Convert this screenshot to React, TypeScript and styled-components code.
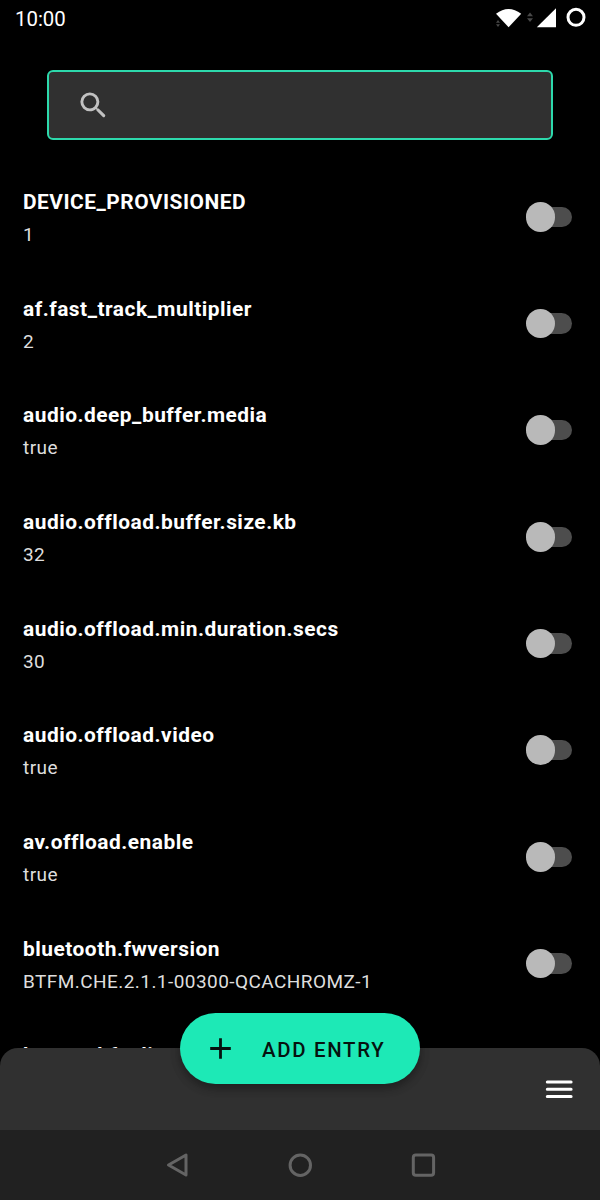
import React from "react";
import styled, { createGlobalStyle } from "styled-components";

const GlobalStyle = createGlobalStyle`
  * { box-sizing: border-box; }
  body { margin: 0; background: #000; overflow: hidden; }
`;

const Screen = styled.div`
  position: relative;
  width: 600px;
  height: 1200px;
  display: flex;
  flex-direction: column;
  overflow: hidden;
  background: #000;
  color: #fff;
  font-family: Roboto, sans-serif;
`;

const StatusBar = styled.header`
  height: 36px;
  flex: none;
  display: flex;
  align-items: center;
  justify-content: space-between;
  padding-left: 15px;
`;

const Clock = styled.span`
  font-size: 20.4px;
  line-height: 36px;
  padding-top: 1px;
`;

const StatusIcons = styled.svg`
  width: 120px;
  height: 36px;
`;

const SearchBox = styled.div`
  flex: none;
  height: 70px;
  margin: 34px 47px 0 46.5px;
  padding-left: 27px;
  display: flex;
  align-items: center;
  background: #303030;
  border: 2px solid #2dd9ac;
  border-radius: 6px;
`;

const SearchIcon = styled.svg`
  width: 35px;
  height: 35px;
  fill: #c1c1c1;
`;

const List = styled.main`
  flex: 1;
  min-height: 0;
  overflow: hidden;
  padding-top: 23.6px;
`;

const Row = styled.div`
  height: 106.67px;
  padding: 0 28.5px 0 23px;
  display: flex;
  align-items: center;
  justify-content: space-between;
`;

const Entry = styled.div`
  display: flex;
  flex-direction: column;
  gap: 3px;
  padding-top: 3px;
  white-space: nowrap;
`;

const Name = styled.span`
  font-size: 20.9px;
  line-height: 29px;
  font-weight: 700;
  letter-spacing: 0.5px;
`;

const Value = styled.span`
  font-size: 19px;
  line-height: 29px;
  letter-spacing: 0.44px;
  color: #dedede;
`;

const Switch = styled.div`
  width: 46px;
  height: 29.5px;
  display: flex;
  align-items: center;
`;

const Thumb = styled.div`
  flex: none;
  width: 29.5px;
  height: 29.5px;
  border-radius: 50%;
  background: #b9b9b9;
  z-index: 1;
`;

const Track = styled.div`
  width: 36px;
  height: 20.5px;
  margin-left: -19.5px;
  border-radius: 11px;
  background: #4d4d4d;
`;

const BottomBar = styled.footer`
  flex: none;
  height: 82px;
  padding: 0 23.5px 0 0;
  display: flex;
  align-items: center;
  justify-content: flex-end;
  background: #303030;
  border-radius: 18px 18px 0 0;
`;

const MenuIcon = styled.svg`
  width: 35px;
  height: 35px;
`;

const AddButton = styled.button`
  position: absolute;
  left: 180px;
  top: 1013.3px;
  width: 240px;
  height: 70.4px;
  padding: 0 0 0 23px;
  display: flex;
  align-items: center;
  border: 0;
  border-radius: 36px;
  background: #1de9b6;
  color: #06120f;
  font: 500 20.4px/70px Roboto, sans-serif;
  letter-spacing: 1.7px;
  box-shadow: 0 5px 9px rgba(0, 0, 0, 0.25), 0 2px 12px rgba(0, 0, 0, 0.15);
`;

const ButtonLabel = styled.span`
  padding-top: 2px;
`;

const PlusIcon = styled.svg`
  width: 35px;
  height: 35px;
  margin-right: 24px;
`;

const NavBar = styled.nav`
  flex: none;
  height: 70px;
  display: flex;
  justify-content: center;
  align-items: center;
  gap: 88px;
  background: #212121;
`;

const NavIcon = styled.svg`
  width: 35px;
  height: 35px;
  fill: none;
  stroke: #646464;
  stroke-width: 3;
  stroke-linejoin: round;
`;

const entries: [string, string][] = [
  ["DEVICE_PROVISIONED", "1"],
  ["af.fast_track_multiplier", "2"],
  ["audio.deep_buffer.media", "true"],
  ["audio.offload.buffer.size.kb", "32"],
  ["audio.offload.min.duration.secs", "30"],
  ["audio.offload.video", "true"],
  ["av.offload.enable", "true"],
  ["bluetooth.fwversion", "BTFM.CHE.2.1.1-00300-QCACHROMZ-1"],
];

export default function App() {
  return (
    <Screen>
      <GlobalStyle />
      <StatusBar>
        <Clock>10:00</Clock>
        <StatusIcons viewBox="0 0 120 36">
          <path d="M16 13.8Q28.5 4.4 41.2 13.8L28.6 27.3Z" fill="#fff" />
          <path d="M16 22.7l2-2.7 2 2.7zM16 24.3l2 2.7 2-2.7z" fill="#484848" />
          <path d="M47 16.3l3-3.8 3 3.8zM47 18.3l3 3.8 3-3.8z" fill="#484848" />
          <path d="M76 8.3V27.2H56.8Z" fill="#fff" />
          <circle cx="96" cy="17.3" r="8" fill="none" stroke="#fff" strokeWidth="3" />
        </StatusIcons>
      </StatusBar>
      <SearchBox>
        <SearchIcon viewBox="0 0 24 24">
          <path d="M15.5 14h-.79l-.28-.27A6.47 6.47 0 0 0 16 9.5 6.5 6.5 0 1 0 9.5 16c1.61 0 3.09-.59 4.23-1.57l.27.28v.79l4.25 4.25a1.06 1.06 0 0 0 1.5-1.5L15.5 14zm-6 0a4.5 4.5 0 1 1 0-9 4.5 4.5 0 0 1 0 9z" />
        </SearchIcon>
      </SearchBox>
      <List>
        {entries.map(([name, value]) => (
          <Row key={name}>
            <Entry>
              <Name>{name}</Name>
              <Value>{value}</Value>
            </Entry>
            <Switch>
              <Thumb />
              <Track />
            </Switch>
          </Row>
        ))}
        <Row>
          <Entry>
            <Name>bt.max.hfpclient</Name>
            <Value>&nbsp;</Value>
          </Entry>
        </Row>
      </List>
      <BottomBar>
        <MenuIcon viewBox="0 0 35 35">
          <path d="M5.3 10h23.8M5.3 17.3h23.8M5.3 24.6h23.8" stroke="#fff" strokeWidth="3" strokeLinecap="round" />
        </MenuIcon>
      </BottomBar>
      <NavBar>
        <NavIcon viewBox="0 0 35 35">
          <path d="M8.5 17L26 7V27Z" />
        </NavIcon>
        <NavIcon viewBox="0 0 35 35">
          <circle cx="17.3" cy="17.2" r="10.2" />
        </NavIcon>
        <NavIcon viewBox="0 0 35 35">
          <rect x="7.3" y="7" width="20.3" height="20.3" rx="2.5" />
        </NavIcon>
      </NavBar>
      <AddButton>
        <PlusIcon viewBox="0 0 35 35">
          <path d="M7.2 17.5h20.6M17.5 7.2v20.6" stroke="#06120f" strokeWidth="2.8" />
        </PlusIcon>
        <ButtonLabel>ADD ENTRY</ButtonLabel>
      </AddButton>
    </Screen>
  );
}
